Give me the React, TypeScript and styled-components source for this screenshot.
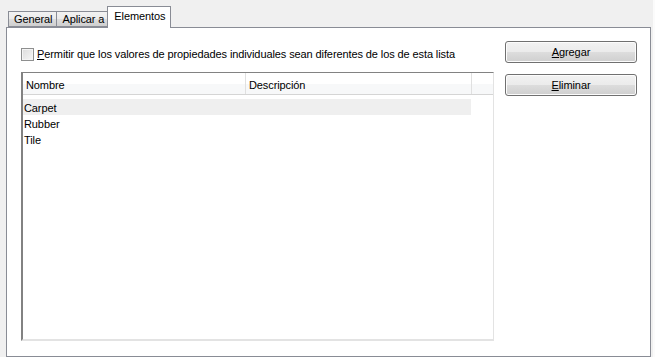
import React from "react";
import styled, { createGlobalStyle } from "styled-components";

const Global = createGlobalStyle`
  html, body { margin: 0; padding: 0; background: #f0f0f0; }
  body { font-family: "Liberation Sans", Tahoma, sans-serif; font-size: 11px; letter-spacing: -0.1px; color: #000; }
`;

const Window = styled.div`
  width: 655px;
  height: 357px;
  background: #f0f0f0;
  box-sizing: border-box;
  border-right: 2px solid #fbfbfb;
  display: flex;
  flex-direction: column;
  padding: 6px 0 0 6px;
  overflow: hidden;
`;

const TabStrip = styled.div`
  display: flex;
  align-items: flex-end;
  height: 21px;
  padding-left: 2px;
  position: relative;
  z-index: 1;
`;

const Tab = styled.div<{ $active?: boolean }>`
  box-sizing: border-box;
  height: ${(p) => (p.$active ? "22px" : "16px")};
  margin-bottom: ${(p) => (p.$active ? "-1px" : "0")};
  padding: ${(p) => (p.$active ? "0 5px 3px 6px" : "0 4px 0 5px")};
  border: 1px solid #898c95;
  border-bottom: ${(p) => (p.$active ? "none" : "1px solid #898c95")};
  margin-left: ${(p) => (p.$active ? "-2px" : "-1px")};
  background: ${(p) =>
    p.$active ? "#ffffff" : "linear-gradient(#f2f2f2, #ebebeb 50%, #dddddd 50%, #cfcfcf)"};
  display: flex;
  align-items: center;
  line-height: 13px;
  white-space: nowrap;
  &:first-child { margin-left: 0; }
`;

const Panel = styled.div`
  flex: 1;
  width: 645px;
  box-sizing: border-box;
  background: #fff;
  border: 1px solid #898c95;
  display: flex;
  padding: 13px 13px 15px 14px;
  gap: 11px;
`;

const LeftColumn = styled.div`
  flex: 1;
  display: flex;
  flex-direction: column;
`;

const CheckRow = styled.label`
  display: flex;
  align-items: center;
  gap: 3px;
  height: 16px;
  margin-top: 5px;
  margin-bottom: 10px;
  white-space: nowrap;
`;

const CheckBox = styled.span`
  width: 13px;
  height: 13px;
  box-sizing: border-box;
  border: 1px solid #8e8f8f;
  background: linear-gradient(135deg, #dcdcdc, #f6f6f6);
  box-shadow: inset 0 0 0 1px #f4f4f4;
  flex: none;
`;

const ListBox = styled.div`
  flex: 1;
  box-sizing: border-box;
  border-top: 1px solid #828282;
  border-left: 2px solid #828282;
  border-right: 1px solid #e3e3e3;
  border-bottom: 2px solid #e3e3e3;
  background: #fff;
  display: flex;
  flex-direction: column;
`;

const Header = styled.div`
  display: flex;
  height: 22px;
  box-sizing: border-box;
  border-bottom: 1px solid #d5d5d5;
  background: linear-gradient(#ffffff 50%, #f7f8f9 50%);
`;

const HeaderCell = styled.div<{ $w?: number }>`
  box-sizing: border-box;
  width: ${(p) => (p.$w ? `${p.$w}px` : "auto")};
  flex: ${(p) => (p.$w ? "none" : "1")};
  border-right: 1px solid #e0e0e0;
  padding-left: 3px;
  display: flex;
  align-items: center;
  padding-top: 2px;
  &:last-child { border-right: none; }
`;

const Rows = styled.div`
  padding-top: 4px;
  display: flex;
  flex-direction: column;
`;

const Row = styled.div<{ $hover?: boolean }>`
  width: 448px;
  height: 16px;
  padding-left: 1px;
  display: flex;
  align-items: center;
  padding-top: 1px;
  box-sizing: border-box;
  background: ${(p) => (p.$hover ? "#efefef" : "transparent")};
`;

const RightColumn = styled.div`
  width: 132px;
  display: flex;
  flex-direction: column;
  gap: 11px;
`;

const Button = styled.button`
  width: 132px;
  height: 22px;
  box-sizing: border-box;
  border: 1px solid #707070;
  border-radius: 3px;
  background: linear-gradient(#f2f2f2, #ebebeb 50%, #dddddd 50%, #cfcfcf);
  box-shadow: inset 0 0 0 1px #fcfcfc;
  font-family: inherit;
  font-size: 11px;
  letter-spacing: -0.1px;
  color: #000;
  padding: 0;
  display: flex;
  align-items: center;
  justify-content: center;
  u { text-decoration: underline; }
`;

export default function App() {
  return (
    <>
      <Global />
      <Window>
        <TabStrip>
          <Tab>General</Tab>
          <Tab>Aplicar a</Tab>
          <Tab $active>Elementos</Tab>
        </TabStrip>
        <Panel>
          <LeftColumn>
            <CheckRow>
              <CheckBox />
              <span>
                <u>P</u>ermitir que los valores de propiedades individuales sean diferentes de los de esta lista
              </span>
            </CheckRow>
            <ListBox>
              <Header>
                <HeaderCell $w={223}>Nombre</HeaderCell>
                <HeaderCell $w={226}>Descripción</HeaderCell>
                <HeaderCell />
              </Header>
              <Rows>
                <Row $hover>Carpet</Row>
                <Row>Rubber</Row>
                <Row>Tile</Row>
              </Rows>
            </ListBox>
          </LeftColumn>
          <RightColumn>
            <Button>
              <span><u>A</u>gregar</span>
            </Button>
            <Button>
              <span><u>E</u>liminar</span>
            </Button>
          </RightColumn>
        </Panel>
      </Window>
    </>
  );
}
